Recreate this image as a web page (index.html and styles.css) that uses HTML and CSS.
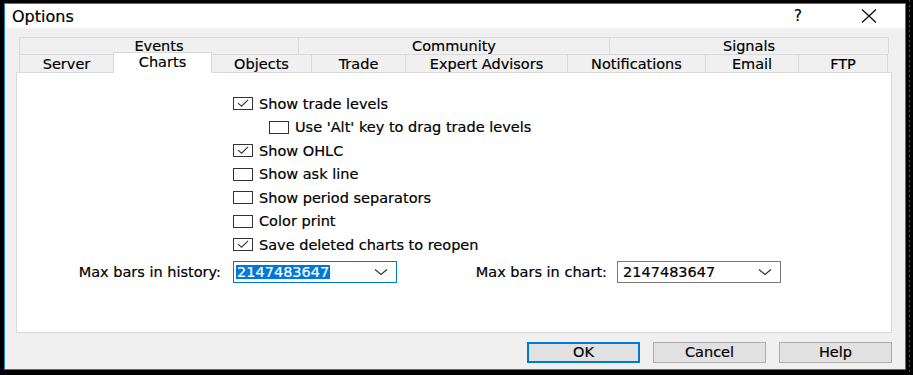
FILE: index.html
```html
<!DOCTYPE html>
<html lang="en">
<head>
  <meta charset="UTF-8">
  <title>Options</title>
  <link rel="stylesheet" href="styles.css">
</head>
<body>
  <div class="desktop">
    <div class="dialog">
      <div class="titlebar">
        <span class="title">Options</span>
        <span class="help-q">?</span>
        <svg class="close-x" width="16" height="14" viewBox="0 0 16 14">
          <path d="M1 0.5 L15 13.5 M15 0.5 L1 13.5" stroke="#111" stroke-width="1.3" fill="none"/>
        </svg>
      </div>

      <div class="tabs">
        <div class="tab-row top">
          <div class="tab" style="width:279px">Events</div>
          <div class="tab" style="width:311px">Community</div>
          <div class="tab" style="width:280px">Signals</div>
        </div>
        <div class="tab-row bottom">
          <div class="tab" style="width:94px">Server</div>
          <div class="tab active" style="width:99px">Charts</div>
          <div class="tab" style="width:99px">Objects</div>
          <div class="tab" style="width:94px">Trade</div>
          <div class="tab" style="width:162px">Expert Advisors</div>
          <div class="tab" style="width:138px">Notifications</div>
          <div class="tab" style="width:93px">Email</div>
          <div class="tab" style="width:90px">FTP</div>
        </div>
      </div>

      <div class="panel">
        <div class="checks">
          <div class="check-row">
            <span class="box checked"><svg viewBox="0 0 19 12"><path d="M4 5.5 L8 9 L15 2" stroke="#333" stroke-width="1.2" fill="none"/></svg></span>
            <span>Show trade levels</span>
          </div>
          <div class="check-row indent">
            <span class="box"></span>
            <span>Use 'Alt' key to drag trade levels</span>
          </div>
          <div class="check-row">
            <span class="box checked"><svg viewBox="0 0 19 12"><path d="M4 5.5 L8 9 L15 2" stroke="#333" stroke-width="1.2" fill="none"/></svg></span>
            <span>Show OHLC</span>
          </div>
          <div class="check-row">
            <span class="box"></span>
            <span>Show ask line</span>
          </div>
          <div class="check-row">
            <span class="box"></span>
            <span>Show period separators</span>
          </div>
          <div class="check-row">
            <span class="box"></span>
            <span>Color print</span>
          </div>
          <div class="check-row">
            <span class="box checked"><svg viewBox="0 0 19 12"><path d="M4 5.5 L8 9 L15 2" stroke="#333" stroke-width="1.2" fill="none"/></svg></span>
            <span>Save deleted charts to reopen</span>
          </div>
        </div>

        <div class="fields">
          <label class="field-label first">Max bars in history:</label>
          <div class="combo focused">
            <span class="combo-text selected">2147483647</span>
            <svg class="chevron" width="14" height="8" viewBox="0 0 14 8"><path d="M1 1.5 L7 6.5 L13 1.5" stroke="#333" stroke-width="1.2" fill="none"/></svg>
          </div>
          <label class="field-label second">Max bars in chart:</label>
          <div class="combo">
            <span class="combo-text">2147483647</span>
            <svg class="chevron" width="14" height="8" viewBox="0 0 14 8"><path d="M1 1.5 L7 6.5 L13 1.5" stroke="#333" stroke-width="1.2" fill="none"/></svg>
          </div>
        </div>
      </div>

      <div class="buttons">
        <button class="btn default">OK</button>
        <button class="btn">Cancel</button>
        <button class="btn">Help</button>
      </div>
    </div>
  </div>
</body>
</html>
```

FILE: styles.css
```css
body {
  margin: 0;
  background: #000;
  font-family: "DejaVu Sans", Verdana, sans-serif;
  font-size: 14.5px;
  color: #000;
  -webkit-text-stroke: 0.2px #000;
}
.desktop {
  width: 913px;
  height: 375px;
  padding: 3px 0 0 4px;
  box-sizing: border-box;
  background:
    repeating-linear-gradient(to bottom, #555 0 2px, transparent 2px 5px) 909px 0 / 1px 100% no-repeat,
    #000;
}
.dialog {
  width: 902px;
  height: 367px;
  box-sizing: border-box;
  border: 1px solid #1a7fd4;
  background: #f0f0f0;
}
.titlebar {
  height: 24px;
  background: #fff;
  display: flex;
  align-items: center;
  padding-left: 7px;
}
.title {
  font-size: 16px;
  flex: 1;
}
.help-q {
  font-size: 15px;
  margin-right: 59px;
}
.close-x {
  margin-right: 28px;
}
.tabs {
  margin: 9px 0 0 14px;
  width: 870px;
}
.tab-row {
  display: flex;
}
.tab-row.top {
  height: 17px;
}
.tab-row.bottom {
  height: 18px;
}
.tab {
  box-sizing: border-box;
  border: 1px solid #dadada;
  border-right: none;
  border-bottom: none;
  background: #f0f0f0;
  display: flex;
  align-items: center;
  justify-content: center;
  line-height: 1;
  padding-top: 1px;
}
.tab-row .tab:last-child {
  border-right: 1px solid #dadada;
}
.tab-row.top .tab {
  height: 17px;
}
.tab-row.bottom .tab {
  height: 18px;
}
.tab-row.bottom .tab.active {
  position: relative;
  z-index: 1;
  height: 21px;
  margin-top: -2px;
  background: #fff;
  border-right: 1px solid #dadada;
  align-items: flex-start;
  padding-top: 2px;
}
.tab.active + .tab {
  border-left: none;
}
.panel {
  margin-left: 11px;
  width: 876px;
  height: 261px;
  box-sizing: border-box;
  border: 1px solid #dadada;
  background: #fff;
  padding: 19px 0 0 216px;
}
.check-row {
  height: 23.5px;
  display: flex;
  align-items: center;
}
.check-row.indent {
  padding-left: 36px;
}
.box {
  width: 20px;
  height: 13px;
  box-sizing: border-box;
  border: 1px solid #333;
  background: #fff;
  margin-right: 6px;
  display: flex;
}
.box svg {
  width: 18px;
  height: 11px;
}
.fields {
  display: flex;
  align-items: center;
  margin: 4px 0 0 -216px;
  height: 22px;
}
.field-label {
  text-align: right;
  box-sizing: border-box;
}
.field-label.first {
  width: 204px;
  margin-right: 12px;
}
.field-label.second {
  width: 210px;
  margin-right: 10px;
}
.combo {
  width: 164px;
  height: 22px;
  box-sizing: border-box;
  border: 1px solid #7a7a7a;
  background: #fff;
  display: flex;
  align-items: center;
  padding: 0 8px 0 5px;
}
.combo.focused {
  border-color: #0078d7;
  padding-left: 2px;
}
.combo-text {
  flex: 1;
}
.combo-text.selected {
  flex: none;
  background: #0078d7;
  color: #fff;
  -webkit-text-stroke: 0.2px #fff;
  padding: 0 1px;
  margin-right: auto;
  line-height: 14px;
}
.chevron {
  margin-left: 6px;
}
.buttons {
  display: flex;
  gap: 13px;
  margin: 9px 0 0 522px;
}
.btn {
  width: 113px;
  height: 21px;
  box-sizing: border-box;
  background: #e1e1e1;
  border: 1px solid #adadad;
  font-family: inherit;
  font-size: 14.5px;
  color: #000;
  -webkit-text-stroke: 0.2px #000;
  padding: 0;
  line-height: 1;
}
.btn.default {
  border: 2px solid #0078d7;
}
```
